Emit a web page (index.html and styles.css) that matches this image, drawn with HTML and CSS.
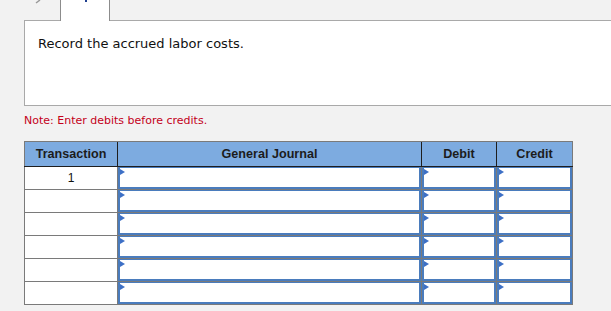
FILE: index.html
```html
<!DOCTYPE html>
<html>
<head>
<meta charset="utf-8">
<link rel="stylesheet" href="styles.css">
</head>
<body>
<div class="page">
  <div class="tabs">
    <svg class="prev" width="8" height="4" viewBox="0 0 8 4"><path d="M7 0 L3 3" stroke="#9a9a9a" stroke-width="1.5" fill="none"/></svg>
    <div class="tab"><span class="tabmark"></span></div>
  </div>
  <div class="question">Record the accrued labor costs.</div>
  <p class="note">Note: Enter debits before credits.</p>
  <table class="journal">
    <colgroup>
      <col class="c-trans"><col class="c-gj"><col class="c-debit"><col class="c-credit">
    </colgroup>
    <thead>
      <tr><th>Transaction</th><th>General Journal</th><th>Debit</th><th>Credit</th></tr>
    </thead>
    <tbody>
      <tr><td class="num">1</td><td class="inp"><div class="field"></div></td><td class="inp"><div class="field"></div></td><td class="inp"><div class="field"></div></td></tr>
      <tr><td class="num"></td><td class="inp"><div class="field"></div></td><td class="inp"><div class="field"></div></td><td class="inp"><div class="field"></div></td></tr>
      <tr><td class="num"></td><td class="inp"><div class="field"></div></td><td class="inp"><div class="field"></div></td><td class="inp"><div class="field"></div></td></tr>
      <tr><td class="num"></td><td class="inp"><div class="field"></div></td><td class="inp"><div class="field"></div></td><td class="inp"><div class="field"></div></td></tr>
      <tr><td class="num"></td><td class="inp"><div class="field"></div></td><td class="inp"><div class="field"></div></td><td class="inp"><div class="field"></div></td></tr>
      <tr><td class="num"></td><td class="inp"><div class="field"></div></td><td class="inp"><div class="field"></div></td><td class="inp"><div class="field"></div></td></tr>
    </tbody>
  </table>
</div>
</body>
</html>
```
FILE: styles.css
```css
html, body {
  margin: 0;
  padding: 0;
  background: #f2f2f2;
}
.page {
  padding-left: 24px;
  font-family: "DejaVu Sans", Verdana, sans-serif;
}
.tabs {
  display: flex;
  height: 20px;
  align-items: flex-start;
}
.prev {
  margin-left: 9px;
  display: block;
}
.tab {
  margin-left: 19px;
  width: 48px;
  height: 21px;
  background: #fff;
  border-left: 1px solid #8c8c8c;
  border-right: 1px solid #8c8c8c;
  position: relative;
  z-index: 1;
  display: flex;
  justify-content: center;
}
.tabmark {
  display: block;
  width: 2px;
  height: 2px;
  margin-left: 2px;
  background: #1f3f8f;
}
.question {
  height: 69px;
  background: #fff;
  border: 1px solid #a9a9a9;
  border-right: none;
  padding: 15px 0 0 13px;
  font-size: 13px;
  color: #111;
}
.note {
  margin: 8px 0 0 0;
  font-size: 11px;
  color: #c4001a;
  line-height: 13px;
}
.journal {
  margin-top: 14px;
  border-collapse: collapse;
  table-layout: fixed;
  width: 549px;
  font-family: "Liberation Sans", Arial, sans-serif;
  border: 1px solid #7a7a7a;
}
.c-trans { width: 93px; }
.c-gj { width: 304px; }
.c-debit { width: 75px; }
.c-credit { width: 76px; }
.journal th {
  background: #7dabe0;
  height: 24px;
  padding: 0;
  font-size: 12.6px;
  font-weight: bold;
  color: #1c1c1c;
  border-left: 1px solid #1e1e1e;
  border-bottom: 1px solid #1e1e1e;
  border-top: 1px solid #7a7a7a;
  text-align: center;
}
.journal th:first-child {
  border-left: 1px solid #7a7a7a;
}
.journal td {
  height: 22px;
  padding: 0;
  border: 1px solid #7a7a7a;
  background: #fff;
}
.journal td.num {
  text-align: center;
  font-size: 12px;
  color: #111;
  vertical-align: middle;
}
.journal td.inp {
  vertical-align: top;
}
.field {
  position: relative;
  height: 19px;
  border: 2px solid #4a7cbd;
  border-top-width: 1px;
  background: #fff;
}
.field::before {
  content: "";
  position: absolute;
  left: 0;
  top: 1px;
  border-top: 3px solid transparent;
  border-bottom: 3px solid transparent;
  border-left: 5px solid #3d70c6;
}
```
